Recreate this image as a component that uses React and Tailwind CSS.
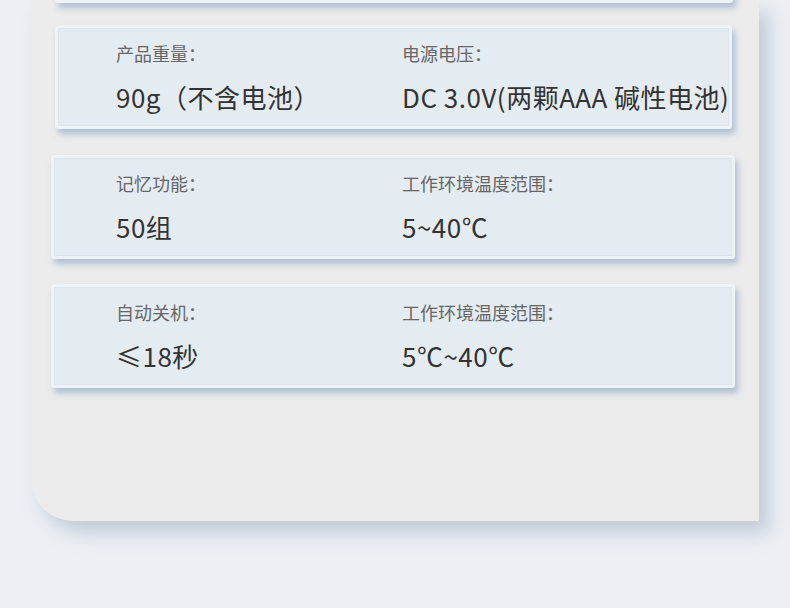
const CARDS = [
  { key: 'top', ml: 'ml-[24px]', w: 'w-[678px]', mt: '-mt-[101px]', items: [] },
  {
    key: 'weight', ml: 'ml-[24px]', w: 'w-[677px]', mt: 'mt-[22px]',
    items: [
      { label: '产品重量：', value: '90g（不含电池）' },
      { label: '电源电压：', value: 'DC 3.0V(两颗AAA 碱性电池)' },
    ],
  },
  {
    key: 'memory', ml: 'ml-[20px]', w: 'w-[684px]', mt: 'mt-[26px]',
    items: [
      { label: '记忆功能：', value: '50组' },
      { label: '工作环境温度范围：', value: '5~40℃' },
    ],
  },
  {
    key: 'off', ml: 'ml-[20px]', w: 'w-[684px]', mt: 'mt-[25px]',
    items: [
      { label: '自动关机：', value: '≤18秒' },
      { label: '工作环境温度范围：', value: '5℃~40℃' },
    ],
  },
]

function Card({ card }) {
  const pad = card.ml === 'ml-[24px]' ? 'pl-[58px]' : 'pl-[62px]'
  return (
    <div
      className={`${card.ml} ${card.w} ${card.mt} h-[104px] shrink-0 rounded-[3px] border-[3px] border-[#eef3f6] bg-[#e4ebf1] shadow-[3px_5px_6px_rgba(140,168,196,0.65),inset_0_0_0_1px_#dde6ed]`}
    >
      <div className={`flex h-full ${pad} pt-[12px]`}>
        {card.items.map((it, i) => (
          <div key={i} className={i === 0 ? 'w-[286px] shrink-0' : 'flex-1 whitespace-nowrap'}>
            <div className="text-[18px] leading-[26px] text-[#666]">{it.label}</div>
            <div className="mt-[13px] text-[26px] leading-[36px] text-[#333] tracking-[0.5px]">{it.value}</div>
          </div>
        ))}
      </div>
    </div>
  )
}

export default function App() {
  return (
    <div
      className="h-[608px] w-[790px] overflow-hidden bg-[#ecf0f5]"
      style={{ fontFamily: '"Noto Sans CJK SC", "Noto Sans", sans-serif' }}
    >
      <div className="ml-[31px] flex h-[521px] w-[728px] flex-col rounded-bl-[42px] bg-[#ececec] shadow-[10px_12px_18px_rgba(160,175,192,0.55)]">
        {CARDS.map(c => (
          <Card key={c.key} card={c} />
        ))}
      </div>
    </div>
  )
}
